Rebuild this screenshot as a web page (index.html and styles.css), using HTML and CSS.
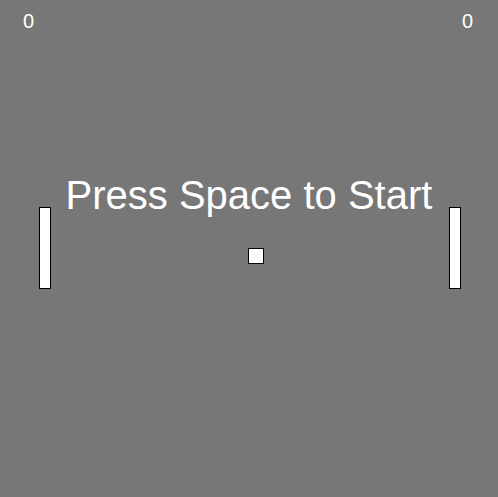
FILE: index.html
```html
<!DOCTYPE html>
<html>
<head>
<meta charset="utf-8">
<link rel="stylesheet" href="styles.css">
</head>
<body>
<div class="game">
  <div class="scores">
    <span class="score">0</span>
    <span class="score">0</span>
  </div>
  <div class="paddle paddle-left"></div>
  <div class="paddle paddle-right"></div>
  <div class="ball"></div>
  <div class="message">Press Space to Start</div>
</div>
</body>
</html>
```
FILE: styles.css
```css
html, body {
  margin: 0;
  padding: 0;
  background: #777777;
}
.game {
  position: relative;
  width: 498px;
  height: 497px;
  background: #777777;
  overflow: hidden;
  font-family: "Liberation Sans", Arial, sans-serif;
  color: #ffffff;
}
.scores {
  display: flex;
  justify-content: space-between;
  padding: 10px 25px 0 23px;
  font-size: 20px;
  line-height: 23px;
}
.paddle {
  position: absolute;
  top: 207px;
  width: 10px;
  height: 80px;
  background: #ffffff;
  border: 1px solid #000000;
}
.paddle-left { left: 39px; }
.paddle-right { left: 449px; }
.ball {
  position: absolute;
  left: 248px;
  top: 248px;
  width: 14px;
  height: 14px;
  background: #ffffff;
  border: 1px solid #000000;
}
.message {
  position: absolute;
  top: 172px;
  left: 0;
  right: 0;
  text-align: center;
  font-size: 40px;
  line-height: 46px;
}
```
